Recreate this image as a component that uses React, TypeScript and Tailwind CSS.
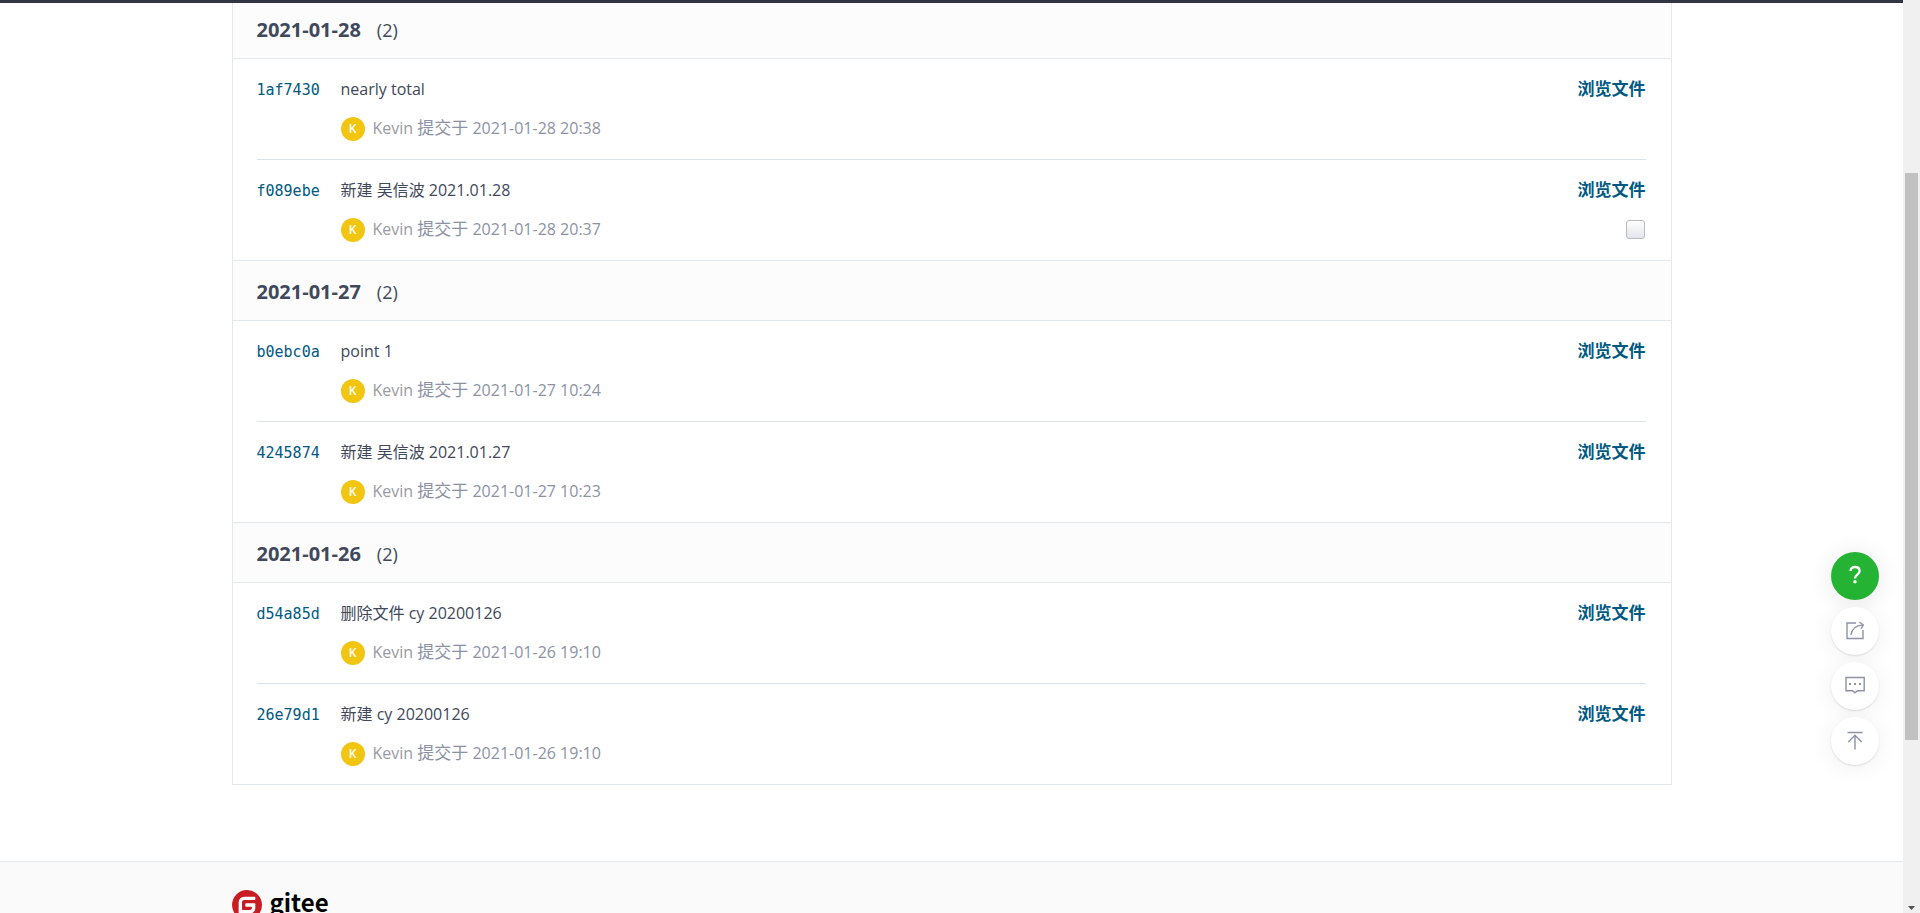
import { ReactNode } from "react";
import clsx from "clsx";
import { SiGitee } from "react-icons/si";

interface Commit {
  sha: string;
  title: string;
  time: string;
  selectable?: boolean;
}

interface CommitDay {
  date: string;
  commits: Commit[];
}

const days: CommitDay[] = [
  {
    date: "2021-01-28",
    commits: [
      { sha: "1af7430", title: "nearly total", time: "2021-01-28 20:38" },
      {
        sha: "f089ebe",
        title: "新建 吴信波 2021.01.28",
        time: "2021-01-28 20:37",
        selectable: true,
      },
    ],
  },
  {
    date: "2021-01-27",
    commits: [
      { sha: "b0ebc0a", title: "point 1", time: "2021-01-27 10:24" },
      {
        sha: "4245874",
        title: "新建 吴信波 2021.01.27",
        time: "2021-01-27 10:23",
      },
    ],
  },
  {
    date: "2021-01-26",
    commits: [
      {
        sha: "d54a85d",
        title: "删除文件 cy 20200126",
        time: "2021-01-26 19:10",
      },
      { sha: "26e79d1", title: "新建 cy 20200126", time: "2021-01-26 19:10" },
    ],
  },
];

const CommitRow = ({ commit, last }: { commit: Commit; last: boolean }) => (
  <li
    className={clsx(
      "mr-[25px] ml-6 flex py-[18px]",
      !last && "border-b border-[#dce3e8]",
    )}
  >
    <a
      href="#"
      className="w-[84px] shrink-0 font-['DejaVu_Sans_Mono',monospace] text-[15px] leading-[26px] text-[#005980]"
    >
      {commit.sha}
    </a>
    <div className="flex flex-1 flex-col gap-4">
      <a href="#" className="self-start leading-6">
        {commit.title}
      </a>
      <div className="flex items-start gap-2 leading-[22px] text-[#8c92a4]">
        <span className="flex size-6 items-center justify-center rounded-full bg-[#f2c511] text-xs font-semibold text-white">
          K
        </span>
        <span>
          <a href="#" className="text-[#9a9a9f]">
            Kevin
          </a>{" "}
          <span className="text-[17px]">提交于</span> {commit.time}
        </span>
      </div>
    </div>
    <div className="flex flex-col items-end gap-[18px]">
      <a href="#" className="text-[17px] leading-6 font-bold text-[#005980]">
        浏览文件
      </a>
      {commit.selectable && (
        <input
          type="checkbox"
          aria-label={`选择 ${commit.sha}`}
          className="mr-px size-[19px] appearance-none rounded-[3px] border border-[#b9bac0] bg-linear-to-b from-white to-[#e4e5ec]"
        />
      )}
    </div>
  </li>
);

const DaySection = ({ day }: { day: CommitDay }) => (
  <section className="border-b border-[#e3e8ec]">
    <header className="flex h-15 items-center gap-4 border-b border-[#e3e8ec] bg-[#fcfcfc] px-6 pt-[2px]">
      <h3 className="text-xl font-bold">{day.date}</h3>
      <span className="text-lg">({day.commits.length})</span>
    </header>
    <ul>
      {day.commits.map((commit, i) => (
        <CommitRow
          key={commit.sha}
          commit={commit}
          last={i === day.commits.length - 1}
        />
      ))}
    </ul>
  </section>
);

const SideButton = ({
  label,
  className,
  children,
}: {
  label: string;
  className: string;
  children: ReactNode;
}) => (
  <button
    type="button"
    aria-label={label}
    className={clsx(
      "flex size-12 items-center justify-center rounded-full",
      className,
    )}
  >
    <svg
      viewBox="0 0 24 24"
      className="size-6"
      fill="none"
      stroke="currentColor"
      strokeWidth="1.4"
    >
      {children}
    </svg>
  </button>
);

const plain =
  "bg-white text-[#8c92a8] shadow-[0_1px_2px_rgba(0,0,0,0.12),0_2px_24px_rgba(0,0,0,0.07)]";

const SideBar = () => (
  <div className="fixed right-[41px] bottom-[148px] flex flex-col gap-[7px]">
    <SideButton
      label="帮助"
      className="bg-[#24b333] text-white shadow-[0_2px_24px_rgba(0,0,0,0.1)]"
    >
      <path
        d="M7.5 7C7.5 4.500 9.300 3 12 3s4.600 1.500 4.600 4c0 3.400-4.600 3.800-4.600 7.400"
        strokeWidth="2.300"
      />
      <circle cx="12" cy="17.700" r="1.700" fill="currentColor" stroke="none" />
    </SideButton>
    <SideButton label="分享" className={plain}>
      <path d="M13 4H4v15.5h16V11" />
      <path d="M8 16c.6-5.600 4-9.400 12-10.100M16.300 3l4 2.900-2.300 4" />
    </SideButton>
    <SideButton label="反馈" className={plain}>
      <path d="M3 3.500h18.200v13.200h-6.700L12 18.800l-2.500-2.100H3z" />
      <path d="M6 10h2m3 0h2m3 0h2" strokeWidth="2" />
    </SideButton>
    <SideButton label="返回顶部" className={plain}>
      <path d="M4.500 3.500h15M12 20.500V6.500M5.300 13 12 6.300l6.700 6.700" />
    </SideButton>
  </div>
);

const ScrollTrack = () => (
  <div className="flex w-[17px] shrink-0 flex-col items-center bg-[#f0f0f0]">
    <div className="mt-[173px] h-[567px] w-[13px] bg-[#c1c1c1]" />
    <svg viewBox="0 0 7 4" className="mt-auto mb-[3px] h-1 w-[7px]">
      <path d="M0 0h7L3.500 4z" fill="#505050" />
    </svg>
  </div>
);

export default function App() {
  return (
    <div className="flex h-screen overflow-hidden bg-white font-['Open_Sans','Noto_Sans_CJK_SC',sans-serif] text-base text-[#40485b]">
      <div className="flex-1 overflow-hidden">
        <div className="relative z-10 h-[3px] bg-[#313543]" />
        <main className="mx-auto -mt-1 max-w-[1440px] border-x border-[#e3e8ec]">
          {days.map((day) => (
            <DaySection key={day.date} day={day} />
          ))}
        </main>
        <footer className="mt-[76px] border-t border-[#e3e8ec] bg-[#fafafa] pt-7 pb-16">
          <div className="mx-auto flex max-w-[1440px] items-start gap-2">
            <span className="rounded-full bg-white">
              <SiGitee className="size-[30px] text-[#c71d23]" />
            </span>
            <span className="font-['Noto_Sans_CJK_SC',sans-serif] text-2xl leading-6 font-bold text-black">
              gitee
            </span>
          </div>
        </footer>
      </div>
      <ScrollTrack />
      <SideBar />
    </div>
  );
}
